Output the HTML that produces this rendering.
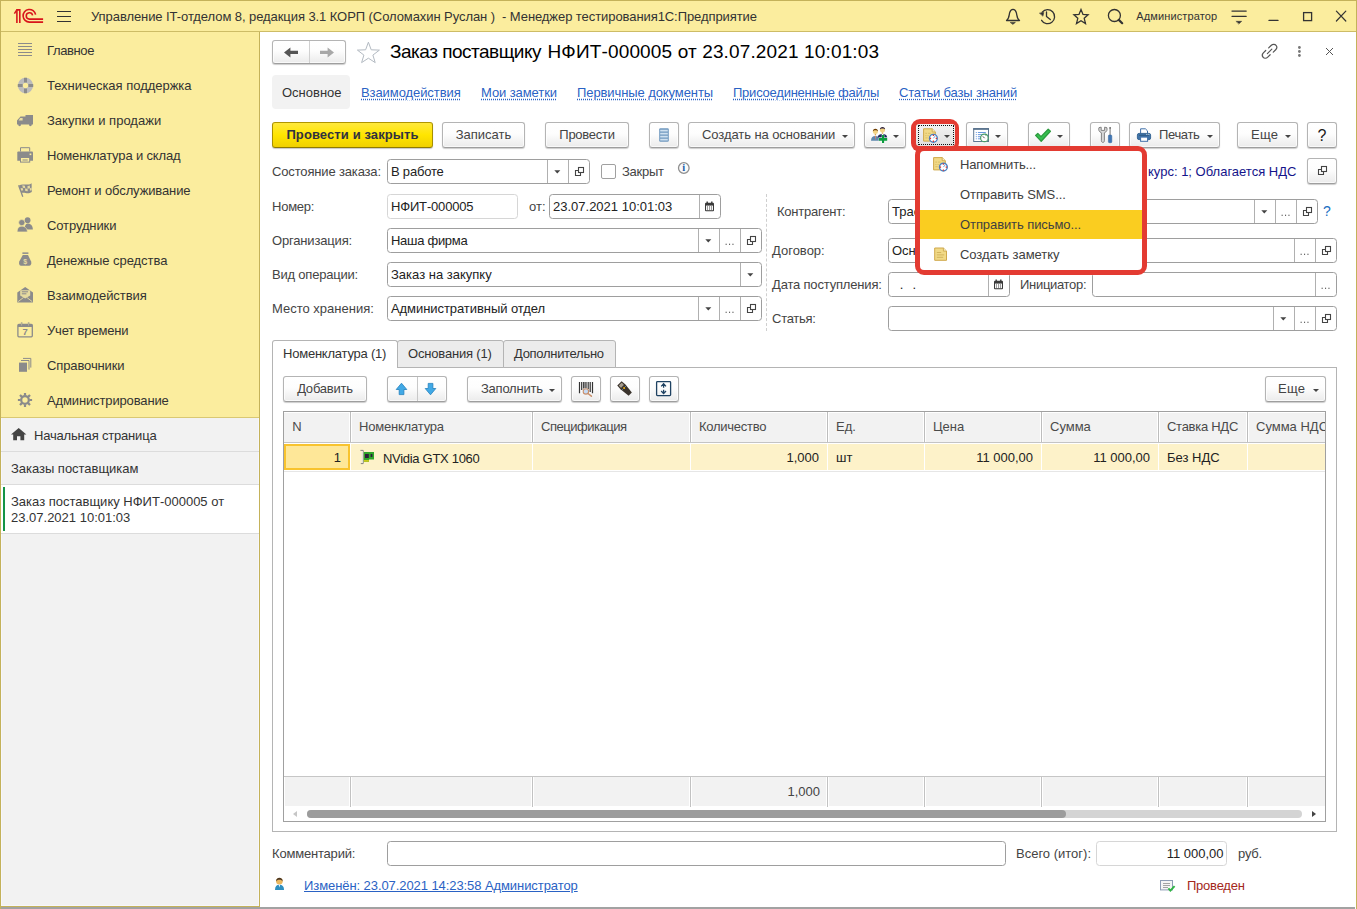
<!DOCTYPE html><html lang="ru"><head><meta charset="utf-8"><title>Управление IT-отделом 8 — 1С:Предприятие</title><style>
*{box-sizing:border-box;margin:0;padding:0}
html,body{width:1357px;height:909px;overflow:hidden;background:#fff}
body{font-family:"Liberation Sans",sans-serif;font-size:13px;color:#333;position:relative}
.a{position:absolute}
.t{position:absolute;white-space:pre;line-height:15px}
.btn{position:absolute;height:26px;border:1px solid #b4b4b4;border-bottom-color:#9e9e9e;border-radius:3px;background:linear-gradient(#ffffff 0%,#fdfdfd 45%,#ebebeb 100%);box-shadow:0 1px 1px rgba(0,0,0,.2),inset 0 0 0 1px rgba(255,255,255,.7);text-align:center;line-height:24px;white-space:pre;color:#444}
.inp{position:absolute;height:25px;border:1px solid #9e9e9e;border-radius:3.5px;background:#fff;line-height:23px;padding-left:3px;white-space:pre;color:#222}
.inp.ro{border-color:#d6d6d6;box-shadow:none}
.sep{position:absolute;top:0;bottom:0;width:1px;background:#b0b0b0}
.lbl{position:absolute;white-space:pre;line-height:15px;color:#444}
.lnk{position:absolute;white-space:pre;line-height:15px;color:#2a62c4;text-decoration:underline dotted;text-underline-offset:2px}
.side{position:absolute;left:47px;white-space:pre;line-height:15px;color:#333}
.th{position:absolute;top:0;height:30px;background:#f2f2f2;border-left:1px solid #bdbdbd;box-shadow:inset 1px 1px 0 #fff,inset -1px 0 0 #fff;line-height:29px;padding-left:8px;color:#4a4a4a;white-space:pre;overflow:hidden}
.td{position:absolute;top:0;height:26px;background:#fdf2c9;line-height:27px;white-space:pre;color:#222}
.tf{position:absolute;top:0;height:30px;background:#f2f2f2;border-left:1px solid #c6c6c6;line-height:29px;white-space:pre;color:#444}
.mi{position:absolute;left:40px;white-space:pre;line-height:15px;color:#333}
</style></head><body>
<div class="a" style="left:0;top:0;width:1357px;height:909px;background:#fff;border:1px solid #c4b25a;border-bottom:none"></div>
<div class="a" style="left:1px;top:907px;width:1354px;height:2px;background:#a2a2a2"></div>
<div class="a" style="left:1px;top:1px;width:1355px;height:30px;background:#fbed9e"></div>
<div class="a" style="left:1px;top:31px;width:1355px;height:1px;background:#cdbc66"></div>
<div class="t" style="left:91px;top:9px;color:#333"><span style="letter-spacing:-0.074px">Управление IT-отделом 8, редакция 3.1 КОРП (Соломахин Руслан )  - Менеджер тестирования1С:Предприятие</span></div>
<div class="t" style="left:1136.3px;top:10px;font-size:11px;line-height:13px;color:#333"><span style="letter-spacing:0.125px">Администратор</span></div>
<svg class="a" style="left:0;top:0" width="1357" height="32" viewBox="0 0 1357 32" fill="none"><g stroke="#d8151b" stroke-width="1.6" fill="none"><path d="M16.9 9.2V22.9M19.8 9.2V22.9M16.1 9.9H20.6"/><path d="M14.4 13.7L16.5 10.4" stroke-width="1.5"/><path d="M35.6 14.6 A6.3 6.3 0 1 0 29.4 22.1 L43.1 22.1"/><path d="M32.6 15.4 A3.2 3.2 0 1 0 29.4 19.1 L43.1 19.1"/></g><g stroke="#333" stroke-width="1.15"><path d="M57 11.45H71M57 16.45H71M57 21.5H71"/></g><g stroke="#333" stroke-width="1.3" stroke-linejoin="round" stroke-linecap="round"><path d="M1006.5 20.5 C1009.5 18.5 1009 15 1009.6 12.8 C1010.2 10.6 1011.6 9.4 1013 9.4 C1014.4 9.4 1015.8 10.6 1016.4 12.8 C1017 15 1016.5 18.5 1019.5 20.5 Z"/><path d="M1010.6 22.4H1015.4L1013 24.2Z" fill="#333" stroke-width="0.6"/><path d="M1042.2 12.2 A7 7 0 1 1 1041.6 20.3"/><path d="M1039.7 13.1L1043.8 12.4L1043 15.9Z" fill="#333" stroke-width="0.5"/><path d="M1046.5 12V16.6L1050.3 19.6"/><path d="M1081 9.4L1083 14.4L1088.1 14.8L1084.2 18.3L1085.5 23.5L1081 20.7L1076.5 23.5L1077.8 18.3L1073.9 14.8L1079 14.4Z" stroke-linejoin="miter"/><circle cx="1114.4" cy="15.5" r="6"/><path d="M1118.8 19.9L1122.2 23.2" stroke-width="2.2"/><path d="M1232 11.1H1246.2M1232 16.3H1246.2"/><path d="M1236.3 21.3H1241.7L1239 23.8Z" fill="#333" stroke-width="0.5"/><path d="M1269 20.4H1278"/><rect x="1303.6" y="12.6" width="8" height="8" stroke-linejoin="miter"/><path d="M1336.4 11.2L1345.8 21M1345.8 11.2L1336.4 21" stroke-width="1.2"/></g></svg>
<div class="a" style="left:1px;top:32px;width:258px;height:386px;background:#fbed9e"></div>
<div class="a" style="left:1px;top:418px;width:258px;height:488px;background:#f2f2f2;box-shadow:inset 1px -1px 0 #f7f7fb,inset -1px 0 0 #f7f7fb"></div>
<div class="a" style="left:259px;top:32px;width:1px;height:875px;background:#c4b25a"></div>
<div class="a" style="left:1px;top:906px;width:259px;height:1px;background:#c4b25a"></div>
<div class="side" style="top:43px"><span style="letter-spacing:-0.382px">Главное</span></div>
<div class="side" style="top:78px"><span style="letter-spacing:-0.022px">Техническая поддержка</span></div>
<div class="side" style="top:113px"><span style="letter-spacing:0.018px">Закупки и продажи</span></div>
<div class="side" style="top:148px"><span style="letter-spacing:-0.148px">Номенклатура и склад</span></div>
<div class="side" style="top:183px"><span style="letter-spacing:-0.124px">Ремонт и обслуживание</span></div>
<div class="side" style="top:218px"><span style="letter-spacing:-0.112px">Сотрудники</span></div>
<div class="side" style="top:253px"><span style="letter-spacing:-0.039px">Денежные средства</span></div>
<div class="side" style="top:288px"><span style="letter-spacing:-0.082px">Взаимодействия</span></div>
<div class="side" style="top:323px"><span style="letter-spacing:-0.165px">Учет времени</span></div>
<div class="side" style="top:358px"><span style="letter-spacing:-0.115px">Справочники</span></div>
<div class="side" style="top:393px"><span style="letter-spacing:-0.133px">Администрирование</span></div>
<svg class="a" style="left:0;top:32px" width="60" height="420" viewBox="0 32 60 420" fill="none"><path d="M18 43.5H32M18 46.5H32M18 49.5H32M18 52.5H32M18 55.5H32" stroke="#8b8b8b" stroke-width="1"/><circle cx="25.5" cy="85.5" r="5.2" stroke="#bcbcbc" stroke-width="5"/><path d="M25.5 77.8V82.6M25.5 88.4V93.2M17.8 85.5H22.6M28.4 85.5H33.2" stroke="#8b8b8b" stroke-width="3"/><path d="M25.5 115H33V124.5H17V120.5L20.5 116.5H25.5Z" fill="#8b8b8b"/><path d="M20.2 118L22.6 118L22.6 120.4L18.6 120.4Z" fill="#e9dea0"/><circle cx="19.6" cy="124.8" r="1.4" fill="#8b8b8b"/><circle cx="30.4" cy="124.8" r="1.4" fill="#8b8b8b"/><path d="M20.5 151.5V147.7H29.7V151.5" stroke="#8b8b8b" stroke-width="1"/><path d="M17.3 152.5Q17.3 151.5 18.3 151.5H32Q33 151.5 33 152.5V160.8H17.3Z" fill="#8b8b8b"/><rect x="20.5" y="157.5" width="9.2" height="4.6" fill="#fbed9e" stroke="#8b8b8b" stroke-width="1"/><path d="M22.5 160H27.7" stroke="#8b8b8b" stroke-width="1"/><rect x="29.6" y="153.5" width="1.7" height="1.6" fill="#fbed9e"/><path d="M18.6 185.2L22.8 196.8" stroke="#8b8b8b" stroke-width="1.3"/><path d="M19 185.4C23 182.8 27 186.4 31.6 183.2L31.8 192C27.4 195 24 191.4 21.6 193.2Z" fill="#8b8b8b"/><path d="M22.3 185.3l2.6 .5l.4 2.5l-2.5 -.5zM27.4 186.2l2.4 -.6l.2 2.6l-2.4 .6zM25 188.4l2.5 .4l.3 2.5l-2.5 -.4zM20.6 188.2l2 -.3l.6 2.4l-1.8 .5zM29.8 188.4l1.8-.8l.1 2.4l-1.7.8z" fill="#e6dba0"/><circle cx="27.6" cy="220.2" r="2.9" fill="#8b8b8b"/><path d="M24.5 228.5C25 224.6 26.5 223.6 27.6 223.6C30 223.6 32.6 225 32.9 229.6H24.5Z" fill="#8b8b8b"/><circle cx="21.8" cy="222.6" r="3.1" fill="#8b8b8b" stroke="#fbed9e" stroke-width=".6"/><path d="M17.2 231.9C17.2 227.8 19.2 226.2 21.8 226.2C24.4 226.2 27.2 227.8 27.4 231.9Z" fill="#8b8b8b" stroke="#fbed9e" stroke-width=".6"/><rect x="22.4" y="252.4" width="6" height="1.5" fill="#8b8b8b"/><path d="M22.8 255H28L31 261.2C32 264 30.6 265.8 28.6 265.8H21.6C19.6 265.8 18.4 264 19.4 261.2Z" fill="#8b8b8b"/><text x="25.2" y="263.6" font-family="Liberation Sans, sans-serif" font-size="7" font-weight="bold" fill="#e6dba0" text-anchor="middle">$</text><path d="M17.3 292.4L25.2 287L33 292.4V302.6H17.3Z" fill="#8b8b8b"/><path d="M20.2 290.2H30.2V295.6L25.2 298.6L20.2 295.6Z" fill="#e6dba0"/><path d="M21.8 291.8H28M21.8 293.8H26.4" stroke="#8b8b8b" stroke-width="1"/><path d="M18.2 301.6L23.6 297.4M32.2 301.6L26.8 297.4" stroke="#e6dba0" stroke-width=".9"/><rect x="17.9" y="324.4" width="14.4" height="12.4" rx="1" stroke="#8b8b8b" stroke-width="1.3"/><rect x="17.9" y="324.4" width="14.4" height="2.6" fill="#8b8b8b"/><path d="M21.6 322.2V325.6M28.6 322.2V325.6" stroke="#8b8b8b" stroke-width="1.4"/><path d="M21.6 322.2V325.6M28.6 322.2V325.6" stroke="#fbed9e" stroke-width=".4"/><text x="25.2" y="335.4" font-family="Liberation Sans, sans-serif" font-size="9.5" font-weight="bold" fill="#8b8b8b" text-anchor="middle">7</text><rect x="19" y="362.6" width="8" height="9.2" fill="#8b8b8b"/><path d="M21 360.5H29V369.6M23 358.4H30.8V367.6" stroke="#8b8b8b" stroke-width="1"/><circle cx="25" cy="400" r="3.8" stroke="#8b8b8b" stroke-width="2.2"/><path d="M25 392.9V395.6M25 404.4V407.1M17.9 400H20.6M29.4 400H32.1M19.98 394.98L21.9 396.9M28.1 403.1L30.02 405.02M30.02 394.98L28.1 396.9M21.9 403.1L19.98 405.02" stroke="#8b8b8b" stroke-width="2.2"/><path d="M11 434.6L18.7 427.9L26.4 434.6H24.2V440.2H20.4V436.2H17V440.2H13.2V434.6Z" fill="#444"/></svg>
<div class="a" style="left:1px;top:417px;width:258px;height:1px;background:#d9c873"></div>
<div class="a" style="left:1px;top:451px;width:258px;height:1px;background:#dcdcdc"></div>
<div class="a" style="left:1px;top:484px;width:258px;height:1px;background:#dcdcdc"></div>
<div class="a" style="left:1px;top:485px;width:258px;height:48px;background:#fff"></div>
<div class="a" style="left:1px;top:533px;width:258px;height:1px;background:#dcdcdc"></div>
<div class="a" style="left:3px;top:487px;width:2px;height:44px;background:#159447"></div>
<div class="t" style="left:34px;top:428px"><span style="letter-spacing:-0.183px">Начальная страница</span></div>
<div class="t" style="left:11px;top:461px"><span style="letter-spacing:-0.026px">Заказы поставщикам</span></div>
<div class="t" style="left:11px;top:494px;line-height:16px">Заказ поставщику НФИТ-000005 от
23.07.2021 10:01:03</div>
<div class="btn" style="left:272px;top:40px;width:74px;height:24px"><div class="sep" style="left:36px;background:#d0d0d0"></div></div>
<div class="t" style="left:390px;top:41px;font-size:19px;line-height:22px;color:#000"><span style="letter-spacing:-0.494px">Заказ поставщику</span></div>
<div class="t" style="left:547.5px;top:41px;font-size:19px;line-height:22px;color:#000"><span style="letter-spacing:0.141px">НФИТ-000005 от 23.07.2021 10:01:03</span></div>
<div class="a" style="left:272px;top:75px;width:78px;height:34px;background:#f2f2f2;border-radius:4px"></div>
<div class="t" style="left:282px;top:85px">Основное</div>
<div class="lnk" style="left:361px;top:85px"><span style="letter-spacing:-0.082px">Взаимодействия</span></div>
<div class="lnk" style="left:481px;top:85px"><span style="letter-spacing:-0.084px">Мои заметки</span></div>
<div class="lnk" style="left:577px;top:85px"><span style="letter-spacing:-0.093px">Первичные документы</span></div>
<div class="lnk" style="left:733px;top:85px"><span style="letter-spacing:-0.229px">Присоединенные файлы</span></div>
<div class="lnk" style="left:899px;top:85px"><span style="letter-spacing:-0.165px">Статьи базы знаний</span></div>
<div class="btn" style="left:272px;top:122px;width:161px;border-color:#b09600 #a89000 #8f7a00;background:linear-gradient(#ffe93c 0%,#ffe500 50%,#f0d000 100%);box-shadow:0 1px 1px rgba(0,0,0,.22);color:#333"><span style="display:inline-block;font-weight:bold;letter-spacing:0.1px;color:#30313f">Провести и закрыть</span></div>
<div class="btn" style="left:442px;top:122px;width:83px;">Записать</div>
<div class="btn" style="left:545px;top:122px;width:84px;"><span style="letter-spacing:-0.277px">Провести</span></div>
<div class="btn" style="left:649px;top:122px;width:30px;"></div>
<div class="btn" style="left:688px;top:122px;width:167px;text-align:left;padding-left:13px"><span style="letter-spacing:-0.079px">Создать на основании</span><span class="a" style="right:6.3px;top:12px;width:0;height:0;border-left:3px solid transparent;border-right:3px solid transparent;border-top:3px solid #444"></span></div>
<div class="btn" style="left:864px;top:122px;width:42px;"><span class="a" style="right:6.3px;top:12px;width:0;height:0;border-left:3px solid transparent;border-right:3px solid transparent;border-top:3px solid #444"></span></div>
<div class="btn" style="left:966px;top:122px;width:42px;"><span class="a" style="right:6.3px;top:12px;width:0;height:0;border-left:3px solid transparent;border-right:3px solid transparent;border-top:3px solid #444"></span></div>
<div class="btn" style="left:1028px;top:122px;width:42px;"><span class="a" style="right:6.3px;top:12px;width:0;height:0;border-left:3px solid transparent;border-right:3px solid transparent;border-top:3px solid #444"></span></div>
<div class="btn" style="left:1090px;top:122px;width:30px;"></div>
<div class="btn" style="left:1129px;top:122px;width:91px;text-align:left;padding-left:29px"><span style="letter-spacing:-0.349px">Печать</span><span class="a" style="right:6.3px;top:12px;width:0;height:0;border-left:3px solid transparent;border-right:3px solid transparent;border-top:3px solid #444"></span></div>
<div class="btn" style="left:1237px;top:122px;width:61px;text-align:left;padding-left:13px"><span style="letter-spacing:0.316px">Еще</span><span class="a" style="right:6.3px;top:12px;width:0;height:0;border-left:3px solid transparent;border-right:3px solid transparent;border-top:3px solid #444"></span></div>
<div class="btn" style="left:1307px;top:122px;width:30px;font-size:16px;color:#1a1a1a;line-height:25px">?</div>
<svg class="a" style="left:640px;top:118px" width="600" height="32" viewBox="640 118 600 32" fill="none"><rect x="659.2" y="128.3" width="9.6" height="13.4" rx="1.2" fill="#6f98bf"/><path d="M660.2 130.6H667.8M660.2 133.6H667.8M660.2 136.6H667.8M660.2 139.6H667.8" stroke="#cfe0ef" stroke-width="1.7"/><path d="M871 140.8C871 137.4 872.4 135.9 875.4 135.9C878.2 135.9 879.6 137.4 879.6 140.8Z" fill="#5f88ae"/><path d="M874.7 135.4H876.1V134H874.7Z" fill="#d9a958"/><path d="M874.8 136L875.4 140.6L876 136Z" fill="#e2826c"/><circle cx="875.4" cy="131.6" r="2.5" fill="#f3d484"/><path d="M872.9 131.4C872.6 127.9 878.2 127.9 877.9 131.4C877.2 129.8 873.6 129.8 872.9 131.4Z" fill="#6b3a00"/><path d="M877.6 137.4C878 134.8 879.8 133.9 882.5 133.9C885.2 133.9 886.8 134.8 887.2 137.4Z" fill="#20295c"/><path d="M881.6 133.9L882.5 136.4L883.4 133.9Z" fill="#fff"/><path d="M881.8 133.8H883.2V132.2H881.8Z" fill="#d9a958"/><circle cx="882.5" cy="129.8" r="2.6" fill="#f3d484"/><path d="M879.9 129.6C879.6 126 885.4 126 885.1 129.6C884.4 128 880.6 128 879.9 129.6Z" fill="#2b2142"/><path d="M878.9 138.1H882V135.1H884.1V138.1H887.2V140.7H884.1V143.1H882V140.7H878.9Z" fill="#0c9c3e" stroke="#fff" stroke-width=".5" paint-order="stroke"/><rect x="973.7" y="128.7" width="14.8" height="12.8" fill="#fff" stroke="#5d7792" stroke-width="1"/><path d="M973.2 129H989" stroke="#536d89" stroke-width="1.6"/><path d="M975.8 132.5H976.8M977.9 132.5H985.8M975.8 134.6H976.8M977.9 134.6H983M975.8 136.7H976.8M977.9 136.7H981.4M975.8 138.8H976.8M977.9 138.8H980.6" stroke="#6a9ae0" stroke-width="1"/><circle cx="984.4" cy="137.9" r="3.8" fill="#fff" stroke="#4a9a68" stroke-width="1.2"/><path d="M984.6 138.2L982.8 136.3" stroke="#555" stroke-width="1"/><path d="M985.4 133.6L987.6 134.6L985.6 136" fill="#4a9a68"/><path d="M1035.6 135.4L1037.8 133.4L1041 136.6L1048.2 129.2L1050.4 131.2L1041.2 141.2Z" fill="#35c04f" stroke="#2c9a3e" stroke-width="1.3" stroke-linejoin="round"/><path d="M1099 127.6C1098.2 129.8 1099 131.8 1101.4 132.8V140.6C1101.4 141.8 1102 142.4 1102.9 142.4C1103.8 142.4 1104.4 141.8 1104.4 140.6V132.8C1106.8 131.8 1107.6 129.8 1106.8 127.6L1104.6 127.2V130.4H1101.2V127.2Z" fill="#d8d8d8" stroke="#777" stroke-width=".9" stroke-linejoin="round"/><path d="M1110.1 127.4V135.4" stroke="#8a8a8a" stroke-width="1.2"/><path d="M1110.1 127.2V128.6" stroke="#444" stroke-width="1.3"/><rect x="1108.4" y="135" width="3.4" height="7.7" rx=".9" fill="#3f76b4" stroke="#2f5f98" stroke-width=".5"/><path d="M1140.6 133.4V128.8H1145.4L1147.5 130.9V133.4" stroke="#3f6fa8" stroke-width="1" fill="#fff"/><rect x="1137.4" y="133.4" width="13.2" height="6.2" rx="1.6" fill="#3f73a8" stroke="#2f5f8f" stroke-width=".9"/><path d="M1139 135.3H1149" stroke="#2a5078" stroke-width=".8"/><path d="M1146.4 134.4h.9M1148.4 134.4h.9" stroke="#fff" stroke-width=".9"/><rect x="1140.6" y="137.1" width="7" height="4.2" fill="#fff" stroke="#3f6fa8" stroke-width="1"/></svg>
<div class="lbl" style="left:272px;top:164px;"><span style="letter-spacing:-0.155px">Состояние заказа:</span></div>
<div class="inp" style="left:387px;top:159px;width:203px;"><span style="letter-spacing:-0.209px">В работе</span><div class="sep" style="left:159px"></div><div class="a" style="left:159px;top:0;width:21px;height:23px"><svg class="a" style="left:0;top:0" width="21" height="23" viewBox="0 0 21 23"><path d="M7.3 10.3H13.3L10.3 13.6Z" fill="#444"/></svg></div><div class="sep" style="left:180px"></div><div class="a" style="left:180px;top:0;width:21px;height:23px"><svg class="a" style="left:0;top:0" width="21" height="23" viewBox="0 0 21 23" fill="none" stroke="#444" stroke-width="1.1"><rect x="10.5" y="7.5" width="5" height="5"/><path d="M10.5 10.5H7.5V15.5H12.5V12.5"/></svg></div></div>
<div class="a" style="left:601px;top:164px;width:15px;height:15px;border:1px solid #a0a0a0;border-radius:2px;background:#fff"></div>
<div class="lbl" style="left:622px;top:164px;"><span style="letter-spacing:-0.269px">Закрыт</span></div>
<div class="lbl" style="left:272px;top:199px;"><span style="letter-spacing:-0.24px">Номер:</span></div>
<div class="inp ro" style="left:387px;top:194px;width:131px;"><span style="letter-spacing:-0.17px">НФИТ-000005</span></div>
<div class="lbl" style="left:529px;top:199px;">от:</div>
<div class="inp" style="left:549px;top:194px;width:172px;">23.07.2021 10:01:03<div class="sep" style="left:149px"></div><div class="a" style="left:149px;top:0;width:21px;height:23px"><svg class="a" style="left:0;top:0" width="21" height="23" viewBox="0 0 21 23"><rect x="6" y="7.8" width="9" height="8.4" rx="1" fill="#3a3a3a"/><rect x="7" y="10.6" width="7" height="4.6" fill="#fff"/><path d="M8.2 6.6V8.4M12.8 6.6V8.4" stroke="#3a3a3a" stroke-width="1.4"/><path d="M7.9 12H9M10 12H11.1M12 12H13.1M7.9 14H9M10 14H11.1M12 14H13.1" stroke="#3a3a3a" stroke-width="1.1"/></svg></div></div>
<div class="lbl" style="left:272px;top:233px;"><span style="letter-spacing:-0.169px">Организация:</span></div>
<div class="inp" style="left:387px;top:228px;width:375px;"><span style="letter-spacing:-0.285px">Наша фирма</span><div class="sep" style="left:310px"></div><div class="a" style="left:310px;top:0;width:21px;height:23px"><svg class="a" style="left:0;top:0" width="21" height="23" viewBox="0 0 21 23"><path d="M7.3 10.3H13.3L10.3 13.6Z" fill="#444"/></svg></div><div class="sep" style="left:331px"></div><div class="a" style="left:331px;top:0;width:21px;height:23px"><svg class="a" style="left:0;top:0" width="21" height="23" viewBox="0 0 21 23"><path d="M6.6 15.3H7.7M10 15.3H11.1M13.4 15.3H14.5" stroke="#333" stroke-width="1.1"/></svg></div><div class="sep" style="left:352px"></div><div class="a" style="left:352px;top:0;width:21px;height:23px"><svg class="a" style="left:0;top:0" width="21" height="23" viewBox="0 0 21 23" fill="none" stroke="#444" stroke-width="1.1"><rect x="10.5" y="7.5" width="5" height="5"/><path d="M10.5 10.5H7.5V15.5H12.5V12.5"/></svg></div></div>
<div class="lbl" style="left:272px;top:267px;"><span style="letter-spacing:-0.206px">Вид операции:</span></div>
<div class="inp" style="left:387px;top:262px;width:375px;">Заказ на закупку<div class="sep" style="left:352px"></div><div class="a" style="left:352px;top:0;width:21px;height:23px"><svg class="a" style="left:0;top:0" width="21" height="23" viewBox="0 0 21 23"><path d="M7.3 10.3H13.3L10.3 13.6Z" fill="#444"/></svg></div></div>
<div class="lbl" style="left:272px;top:301px;">Место хранения:</div>
<div class="inp" style="left:387px;top:296px;width:375px;"><span style="letter-spacing:-0.067px">Административный отдел</span><div class="sep" style="left:310px"></div><div class="a" style="left:310px;top:0;width:21px;height:23px"><svg class="a" style="left:0;top:0" width="21" height="23" viewBox="0 0 21 23"><path d="M7.3 10.3H13.3L10.3 13.6Z" fill="#444"/></svg></div><div class="sep" style="left:331px"></div><div class="a" style="left:331px;top:0;width:21px;height:23px"><svg class="a" style="left:0;top:0" width="21" height="23" viewBox="0 0 21 23"><path d="M6.6 15.3H7.7M10 15.3H11.1M13.4 15.3H14.5" stroke="#333" stroke-width="1.1"/></svg></div><div class="sep" style="left:352px"></div><div class="a" style="left:352px;top:0;width:21px;height:23px"><svg class="a" style="left:0;top:0" width="21" height="23" viewBox="0 0 21 23" fill="none" stroke="#444" stroke-width="1.1"><rect x="10.5" y="7.5" width="5" height="5"/><path d="M10.5 10.5H7.5V15.5H12.5V12.5"/></svg></div></div>
<div class="a" style="left:766px;top:194px;width:0;height:137px;border-left:1px dashed #cfcfcf"></div>
<div class="lbl" style="left:1148px;top:164px;color:#14148a">курс: 1; Облагается НДС</div>
<div class="btn" style="left:1307px;top:158px;width:30px;"></div>
<div class="lbl" style="left:777px;top:204px;"><span style="letter-spacing:-0.221px">Контрагент:</span></div>
<div class="inp" style="left:888px;top:199px;width:430px;">Трас<div class="sep" style="left:365px"></div><div class="a" style="left:365px;top:0;width:21px;height:23px"><svg class="a" style="left:0;top:0" width="21" height="23" viewBox="0 0 21 23"><path d="M7.3 10.3H13.3L10.3 13.6Z" fill="#444"/></svg></div><div class="sep" style="left:386px"></div><div class="a" style="left:386px;top:0;width:21px;height:23px"><svg class="a" style="left:0;top:0" width="21" height="23" viewBox="0 0 21 23"><path d="M6.6 15.3H7.7M10 15.3H11.1M13.4 15.3H14.5" stroke="#333" stroke-width="1.1"/></svg></div><div class="sep" style="left:407px"></div><div class="a" style="left:407px;top:0;width:21px;height:23px"><svg class="a" style="left:0;top:0" width="21" height="23" viewBox="0 0 21 23" fill="none" stroke="#444" stroke-width="1.1"><rect x="10.5" y="7.5" width="5" height="5"/><path d="M10.5 10.5H7.5V15.5H12.5V12.5"/></svg></div></div>
<div class="lbl" style="left:1323px;top:204px;color:#1b6fc2;font-size:14px">?</div>
<div class="lbl" style="left:772px;top:243px;">Договор:</div>
<div class="inp" style="left:888px;top:238px;width:449px;">Осн<div class="sep" style="left:405px"></div><div class="a" style="left:405px;top:0;width:21px;height:23px"><svg class="a" style="left:0;top:0" width="21" height="23" viewBox="0 0 21 23"><path d="M6.6 15.3H7.7M10 15.3H11.1M13.4 15.3H14.5" stroke="#333" stroke-width="1.1"/></svg></div><div class="sep" style="left:426px"></div><div class="a" style="left:426px;top:0;width:21px;height:23px"><svg class="a" style="left:0;top:0" width="21" height="23" viewBox="0 0 21 23" fill="none" stroke="#444" stroke-width="1.1"><rect x="10.5" y="7.5" width="5" height="5"/><path d="M10.5 10.5H7.5V15.5H12.5V12.5"/></svg></div></div>
<div class="lbl" style="left:772px;top:277px;"><span style="letter-spacing:-0.178px">Дата поступления:</span></div>
<div class="inp" style="left:888px;top:272px;width:122px;"><span style="margin-left:7.8px">.</span><span style="margin-left:9.1px">.</span><div class="sep" style="left:99px"></div><div class="a" style="left:99px;top:0;width:21px;height:23px"><svg class="a" style="left:0;top:0" width="21" height="23" viewBox="0 0 21 23"><rect x="6" y="7.8" width="9" height="8.4" rx="1" fill="#3a3a3a"/><rect x="7" y="10.6" width="7" height="4.6" fill="#fff"/><path d="M8.2 6.6V8.4M12.8 6.6V8.4" stroke="#3a3a3a" stroke-width="1.4"/><path d="M7.9 12H9M10 12H11.1M12 12H13.1M7.9 14H9M10 14H11.1M12 14H13.1" stroke="#3a3a3a" stroke-width="1.1"/></svg></div></div>
<div class="lbl" style="left:1020px;top:277px;"><span style="letter-spacing:-0.303px">Инициатор:</span></div>
<div class="inp" style="left:1092px;top:272px;width:245px;"><div class="sep" style="left:222px"></div><div class="a" style="left:222px;top:0;width:21px;height:23px"><svg class="a" style="left:0;top:0" width="21" height="23" viewBox="0 0 21 23"><path d="M6.6 15.3H7.7M10 15.3H11.1M13.4 15.3H14.5" stroke="#333" stroke-width="1.1"/></svg></div></div>
<div class="lbl" style="left:772px;top:311px;"><span style="letter-spacing:-0.262px">Статья:</span></div>
<div class="inp" style="left:888px;top:306px;width:449px;"><div class="sep" style="left:384px"></div><div class="a" style="left:384px;top:0;width:21px;height:23px"><svg class="a" style="left:0;top:0" width="21" height="23" viewBox="0 0 21 23"><path d="M7.3 10.3H13.3L10.3 13.6Z" fill="#444"/></svg></div><div class="sep" style="left:405px"></div><div class="a" style="left:405px;top:0;width:21px;height:23px"><svg class="a" style="left:0;top:0" width="21" height="23" viewBox="0 0 21 23"><path d="M6.6 15.3H7.7M10 15.3H11.1M13.4 15.3H14.5" stroke="#333" stroke-width="1.1"/></svg></div><div class="sep" style="left:426px"></div><div class="a" style="left:426px;top:0;width:21px;height:23px"><svg class="a" style="left:0;top:0" width="21" height="23" viewBox="0 0 21 23" fill="none" stroke="#444" stroke-width="1.1"><rect x="10.5" y="7.5" width="5" height="5"/><path d="M10.5 10.5H7.5V15.5H12.5V12.5"/></svg></div></div>
<div class="a" style="left:272px;top:367px;width:1065px;height:465px;border:1px solid #b4b4b4;background:#fff"></div>
<div class="a" style="left:397px;top:340px;width:107px;height:28px;border:1px solid #b4b4b4;border-radius:3px 3px 0 0;background:#ececec"></div>
<div class="a" style="left:503px;top:340px;width:113px;height:28px;border:1px solid #b4b4b4;border-radius:3px 3px 0 0;background:#ececec"></div>
<div class="a" style="left:272px;top:340px;width:126px;height:28px;border:1px solid #b4b4b4;border-bottom:none;border-radius:3px 3px 0 0;background:#fff"></div>
<div class="t" style="left:283px;top:346px"><span style="letter-spacing:-0.222px">Номенклатура (1)</span></div>
<div class="t" style="left:408px;top:346px"><span style="letter-spacing:-0.177px">Основания (1)</span></div>
<div class="t" style="left:514px;top:346px"><span style="letter-spacing:-0.298px">Дополнительно</span></div>
<div class="btn" style="left:283px;top:376px;width:84px;"><span style="letter-spacing:-0.219px">Добавить</span></div>
<div class="btn" style="left:387px;top:376px;width:60px;"><div class="sep" style="left:29px;background:#c8c8c8"></div></div>
<div class="btn" style="left:467px;top:376px;width:95px;text-align:left;padding-left:13px"><span style="letter-spacing:-0.236px">Заполнить</span><span class="a" style="right:6.3px;top:12px;width:0;height:0;border-left:3px solid transparent;border-right:3px solid transparent;border-top:3px solid #444"></span></div>
<div class="btn" style="left:571px;top:376px;width:30px;"></div>
<div class="btn" style="left:610px;top:376px;width:30px;"></div>
<div class="btn" style="left:649px;top:376px;width:30px;"></div>
<div class="btn" style="left:1265px;top:376px;width:61px;text-align:left;padding-left:12px"><span style="letter-spacing:0.316px">Еще</span><span class="a" style="right:6.3px;top:12px;width:0;height:0;border-left:3px solid transparent;border-right:3px solid transparent;border-top:3px solid #444"></span></div>
<svg class="a" style="left:380px;top:372px" width="320" height="34" viewBox="380 372 320 34" fill="none"><path d="M401.5 383.2L406.8 389.5H403.9V394.6H399.2V389.5H396.2Z" fill="#41a9e6" stroke="#2380bd" stroke-width=".8" stroke-linejoin="round"/><path d="M430.5 394.8L435.8 388.5H432.9V383.4H428.2V388.5H425.2Z" fill="#41a9e6" stroke="#2380bd" stroke-width=".8" stroke-linejoin="round"/><path d="M579.5 382V393.2M581.7 382V390M583.7 382V388.4M586 382V388.2M588.2 382V389M590.2 382V392M592.5 382V393.2" stroke="#333" stroke-width="1.2"/><path d="M584.9 382V388" stroke="#333" stroke-width=".6"/><circle cx="585.9" cy="391.4" r="2.7" fill="#c4dbf6" stroke="#c8906c" stroke-width="1.1"/><path d="M588 393.5L591.4 396.2" stroke="#c8906c" stroke-width="1.5" stroke-linecap="round"/><g transform="translate(624.9 388.8) rotate(-45) scale(.9)"><path d="M-3.4 -8.6H3.4L3.9 -3L2.5 8.4H-2.5L-3.9 -3Z" fill="#3a332c"/><rect x="-2.3" y="-7.4" width="4.6" height="3.6" rx=".6" fill="#a59c8e"/><circle cx="0" cy="-1.2" r="1.1" fill="#f0b010"/><path d="M-2.8 -1.4H-1.6M1.6 -1.4H2.8" stroke="#6aa0c8" stroke-width="1"/></g><rect x="656.6" y="381.6" width="14" height="14" rx=".8" stroke="#1f4262" stroke-width="1.3"/><path d="M663.6 384V387.8M663.6 389.8V393.4M661.2 386.4L663.6 383.8L666 386.4M661.2 391L663.6 393.6L666 391" stroke="#1f4262" stroke-width="1.3"/></svg>
<div class="a" style="left:283px;top:411px;width:1043px;height:411px;border:1px solid #a0a0a0;background:#fff;overflow:hidden">
<div class="a" style="left:0;top:0;width:1041px;height:30px;background:#f2f2f2"></div>
<div class="th" style="left:-1px;width:67px;border-left:none;padding-left:9.3px;">N</div>
<div class="th" style="left:66px;width:182px;"><span style="letter-spacing:-0.196px">Номенклатура</span></div>
<div class="th" style="left:248px;width:158px;"><span style="letter-spacing:-0.473px">Спецификация</span></div>
<div class="th" style="left:406px;width:137px;"><span style="letter-spacing:-0.261px">Количество</span></div>
<div class="th" style="left:543px;width:97px;">Ед.</div>
<div class="th" style="left:640px;width:117px;">Цена</div>
<div class="th" style="left:757px;width:117px;">Сумма</div>
<div class="th" style="left:874px;width:89px;"><span style="letter-spacing:-0.273px">Ставка НДС</span></div>
<div class="th" style="left:963px;width:152px;">Сумма НДС</div>
<div class="a" style="left:0;top:30px;width:1041px;height:1px;background:#c4c4c4"></div>
<div class="td" style="left:0;top:32px;width:66px;border:2px solid #f8c32e;background:#fee798;line-height:23px;text-align:right;padding-right:7px">1</div>
<div class="td" style="left:67px;top:32px;width:181px;padding-left:8px;"></div>
<div class="td" style="left:249px;top:32px;width:157px;padding-left:8px;"></div>
<div class="td" style="left:407px;top:32px;width:136px;text-align:right;padding-right:8px;">1,000</div>
<div class="td" style="left:544px;top:32px;width:96px;padding-left:8px;">шт</div>
<div class="td" style="left:641px;top:32px;width:116px;text-align:right;padding-right:8px;">11 000,00</div>
<div class="td" style="left:758px;top:32px;width:116px;text-align:right;padding-right:8px;">11 000,00</div>
<div class="td" style="left:875px;top:32px;width:88px;padding-left:8px;">Без НДС</div>
<div class="td" style="left:964px;top:32px;width:151px;padding-left:8px;"></div>
<div class="t" style="left:99px;top:38.5px;color:#222"><span style="letter-spacing:-0.296px">NVidia GTX 1060</span></div>
<div class="a" style="left:0;top:59px;width:1041px;height:1px;background:#e6e6e6"></div>
<div class="a" style="left:0;top:364px;width:1041px;height:1px;background:#c6c6c6"></div>
<div class="a" style="left:1px;top:365px;width:1040px;height:29px;background:#f2f2f2"></div>
<div class="a" style="left:65px;top:365px;width:3px;height:30px;background:#fff"></div><div class="a" style="left:66px;top:365px;width:1px;height:30px;background:#c2c2c2"></div>
<div class="a" style="left:247px;top:365px;width:3px;height:30px;background:#fff"></div><div class="a" style="left:248px;top:365px;width:1px;height:30px;background:#c2c2c2"></div>
<div class="a" style="left:405px;top:365px;width:3px;height:30px;background:#fff"></div><div class="a" style="left:406px;top:365px;width:1px;height:30px;background:#c2c2c2"></div>
<div class="a" style="left:542px;top:365px;width:3px;height:30px;background:#fff"></div><div class="a" style="left:543px;top:365px;width:1px;height:30px;background:#c2c2c2"></div>
<div class="a" style="left:639px;top:365px;width:3px;height:30px;background:#fff"></div><div class="a" style="left:640px;top:365px;width:1px;height:30px;background:#c2c2c2"></div>
<div class="a" style="left:756px;top:365px;width:3px;height:30px;background:#fff"></div><div class="a" style="left:757px;top:365px;width:1px;height:30px;background:#c2c2c2"></div>
<div class="a" style="left:873px;top:365px;width:3px;height:30px;background:#fff"></div><div class="a" style="left:874px;top:365px;width:1px;height:30px;background:#c2c2c2"></div>
<div class="a" style="left:962px;top:365px;width:3px;height:30px;background:#fff"></div><div class="a" style="left:963px;top:365px;width:1px;height:30px;background:#c2c2c2"></div>
<div class="t" style="left:406px;top:372px;width:130px;text-align:right;color:#444">1,000</div>
<div class="a" style="left:0;top:395px;width:1041px;height:14px;background:#fff"></div>
<div class="a" style="left:23px;top:398px;width:995px;height:8px;border-radius:4px;background:#d4d4d4"></div>
<div class="a" style="left:23px;top:398px;width:759px;height:8px;border-radius:4px;background:#9c9c9c"></div>
<div class="a" style="left:9px;top:398px;width:0;height:0;border-top:3.3px solid transparent;border-bottom:3.3px solid transparent;border-right:4px solid #c6c6c6;margin-top:.7px"></div>
<div class="a" style="left:1028px;top:398px;width:0;height:0;border-top:3.3px solid transparent;border-bottom:3.3px solid transparent;border-left:4px solid #444;margin-top:.7px"></div>
</div>
<div class="lbl" style="left:272px;top:846px;"><span style="letter-spacing:-0.192px">Комментарий:</span></div>
<div class="inp" style="left:387px;top:841px;width:619px;"></div>
<div class="lbl" style="left:1016px;top:846px;">Всего (итог):</div>
<div class="inp ro" style="left:1096px;top:841px;width:131px;text-align:right;padding-right:2.5px">11 000,00</div>
<div class="lbl" style="left:1238px;top:846px;"><span style="letter-spacing:-0.199px">руб.</span></div>
<div class="t" style="left:304px;top:878px;color:#2a62c4;text-decoration:underline"><span style="letter-spacing:-0.078px">Изменён: 23.07.2021 14:23:58 Администратор</span></div>
<div class="t" style="left:1187px;top:878px;color:#a3281b"><span style="letter-spacing:-0.227px">Проведен</span></div>
<div class="a" style="left:911px;top:119px;width:48px;height:33px;border-radius:9px;background:#e33b32"></div>
<div class="a" style="left:915px;top:146px;width:232px;height:129px;border:5px solid #e33b32;border-radius:9px;background:#fff"></div>
<div class="a" style="left:916px;top:124px;width:39px;height:22px;border-radius:3px;background:linear-gradient(#f3f3f3,#e0e0e0)"></div>
<div class="a" style="left:918px;top:125px;width:36px;height:20px;border:1px dotted #111;border-radius:1px"></div>
<div class="a" style="left:944.3px;top:134.6px;width:0;height:0;border-left:3.1px solid transparent;border-right:3.1px solid transparent;border-top:3.1px solid #444"></div>
<div class="a" style="left:920px;top:210px;width:222px;height:29px;background:#facd20"></div>
<div class="t" style="left:960px;top:157px;color:#404040"><span style="letter-spacing:-0.154px">Напомнить...</span></div>
<div class="t" style="left:960px;top:187px;color:#404040"><span style="letter-spacing:-0.081px">Отправить SMS...</span></div>
<div class="t" style="left:960px;top:217px;color:#404040"><span style="letter-spacing:-0.087px">Отправить письмо...</span></div>
<div class="t" style="left:960px;top:247px;color:#404040"><span style="letter-spacing:-0.056px">Создать заметку</span></div>
<svg class="a" style="left:915px;top:120px" width="60" height="150" viewBox="915 120 60 150" fill="none"><path d="M923.6 128.8H932.2L935.3 131.9V141.1H923.6Z" fill="#f1d986" stroke="#cfa84a" stroke-width="1"/><path d="M932.2 128.8V131.9H935.3" fill="#f8ecc0" stroke="#c8a244" stroke-width=".8"/><path d="M925.3 133.3H927.1M928.1 133.3H930.5M925.3 135.7H926.5M927.5 135.7H928.7M925.3 137.9H927.7" stroke="#d6bb62" stroke-width=".9"/><circle cx="933.4" cy="138.3" r="3.9" fill="#fff" stroke="#4a80c0" stroke-width="1.4"/><path d="M933.4 134.7v1.3M933.4 140.6v1.3M929.8 138.3h1.3M935.7 138.3h1.3" stroke="#e8302a" stroke-width="1.2"/><path d="M933.4 138.3L935.1 136.1" stroke="#7aa0d8" stroke-width="1"/><path d="M933.6 157.6H942.2L945.3 160.7V169.9H933.6Z" fill="#f1d986" stroke="#cfa84a" stroke-width="1"/><path d="M942.2 157.6V160.7H945.3" fill="#f8ecc0" stroke="#c8a244" stroke-width=".8"/><path d="M935.3 162.1H937.1M938.1 162.1H940.5M935.3 164.5H936.5M937.5 164.5H938.7M935.3 166.7H937.7" stroke="#d6bb62" stroke-width=".9"/><circle cx="943.4" cy="167.1" r="3.9" fill="#fff" stroke="#4a80c0" stroke-width="1.4"/><path d="M943.4 163.5v1.3M943.4 169.4v1.3M939.8 167.1h1.3M945.7 167.1h1.3" stroke="#e8302a" stroke-width="1.2"/><path d="M943.4 167.1L945.1 164.9" stroke="#7aa0d8" stroke-width="1"/><path d="M934.7 248.0H943.4L946.5 251.1V260.3H934.7Z" fill="#f1d986" stroke="#cfa84a" stroke-width="1"/><path d="M943.4 248.0V251.1H946.5" fill="#f8ecc0" stroke="#c8a244" stroke-width=".8"/><path d="M936.8 252.5H941.2M936.8 254.9H944.2M936.8 257.3H943.2" stroke="#d3b45c" stroke-width="1"/></svg>
<svg class="a" style="left:260px;top:32px" width="1097" height="875" viewBox="260 32 1097 875" fill="none"><path d="M284 52.4L290.4 47.4V50.8H298V54.1H290.4V57.5Z" fill="#555"/><path d="M334 52.4L327.6 47.4V50.8H320V54.1H327.6V57.5Z" fill="#a8a8a8"/><path d="M368.4 42.2L371.2 49.8L379.4 50.1L372.9 55.1L375.2 62.6L368.4 58.2L361.6 62.6L363.9 55.1L357.4 50.1L365.6 49.8Z" stroke="#b3bac2" stroke-width="1"/><g stroke="#555" stroke-width="1.3" stroke-linecap="round" transform="translate(1269.5 51.3) scale(.92) translate(-1269.5 -51.3)"><path d="M1268.6 47.6L1271.2 45C1273.2 43 1275.6 43.6 1276.6 44.8C1277.8 46.2 1277.6 48.2 1276.2 49.6L1273.6 52.2"/><path d="M1270.2 55L1267.6 57.6C1265.8 59.4 1263.6 59 1262.6 57.8C1261.4 56.4 1261.4 54.4 1262.8 53L1265.4 50.4"/><path d="M1267.2 53.8L1272 49"/></g><circle cx="1299.4" cy="47.5" r="1.4" fill="#777"/><circle cx="1299.4" cy="51.5" r="1.4" fill="#777"/><circle cx="1299.4" cy="55.5" r="1.4" fill="#777"/><path d="M1326 48L1333 55M1333 48L1326 55" stroke="#555" stroke-width="1"/><circle cx="683.8" cy="168" r="5.3" fill="#fafafa" stroke="#8f8f8f" stroke-width="1.3"/><text x="683.8" y="171.4" font-family="Liberation Serif, serif" font-weight="bold" font-size="10.5" fill="#1c5fa8" text-anchor="middle">i</text><g stroke="#444" stroke-width="1.1"><rect x="1321.5" y="166.5" width="5" height="5"/><path d="M1321.5 169.5H1318.5V174.5H1323.5V171.5"/></g><path d="M360.4 450.4H363.2V463.6H360.8" stroke="#777" stroke-width=".9"/><path d="M362.2 451V463" stroke="#e8e8e8" stroke-width="1"/><path d="M363.8 452H374V459.6H369V461.8H363.8Z" fill="#2fa52a"/><rect x="363.9" y="460" width="5" height="1.8" fill="#c9c81a"/><rect x="365" y="454" width="3.8" height="4" fill="#2b1f3a"/><rect x="370.6" y="454" width="1.8" height="3" fill="#2b1f3a"/><circle cx="279.4" cy="881.2" r="3.3" fill="#ecb860"/><path d="M276.1 881.6C275.8 876.6 283 876.6 282.7 881.6C282 879 276.8 879 276.1 881.6Z" fill="#4a3520"/><path d="M275 890C275 886.4 276.6 884.8 279.4 884.8C282.2 884.8 284 886.4 284 890Z" fill="#2f8fc0"/><path d="M278.7 884.8L279.4 887.4L280.1 884.8Z" fill="#fff"/><rect x="1160.5" y="880.5" width="12" height="9.4" fill="#f4f4f4" stroke="#8d9cb4" stroke-width="1"/><path d="M1163 883.5H1170M1163 885.5H1170M1163 887.5H1168" stroke="#9a9a9a" stroke-width=".9"/><path d="M1168.4 888.4L1170.4 890.6L1174.6 886.2" stroke="#2fb544" stroke-width="1.9"/></svg>
</body></html>
